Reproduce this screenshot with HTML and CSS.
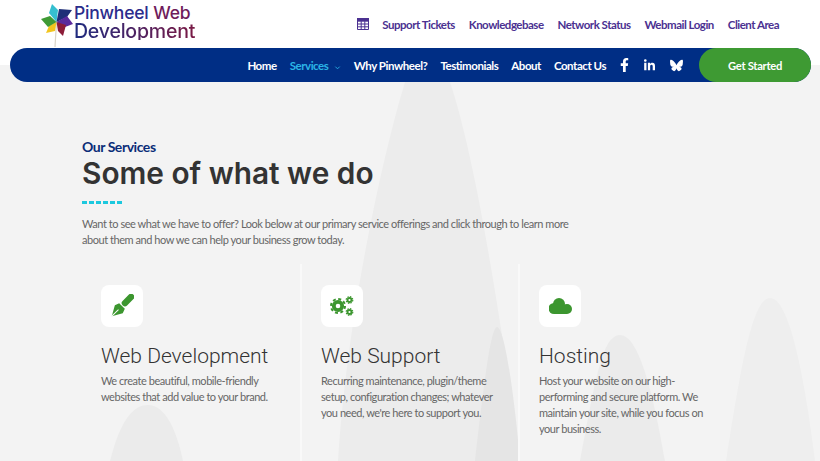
FILE: index.html
```html
<!DOCTYPE html>
<html lang="en">
<head>
  <meta charset="UTF-8" />
  <meta name="viewport" content="width=device-width, initial-scale=1.0" />
  <title>Pinwheel Web Development</title>
  <link rel="stylesheet" href="styles.css">
</head>
<body>
  <header class="top">
    <a class="logo" href="#">
      <svg class="pinwheel" viewBox="0 0 33 46" width="33" height="46">
        <path d="M15.5 20 L14 45" stroke="#d8d4c8" stroke-width="1.2"/>
        <path d="M15.500 20 L8 11 L11 2 L17 8 Z" fill="#35bfd0"/>
        <path d="M15.500 20 L18 7 L31 8 L26 15 Z" fill="#1f2f78"/>
        <path d="M15.500 20 L26 14 L32 22 L24 25 Z" fill="#5a2a9c"/>
        <path d="M15.500 20 L25 23 L22 34 L17 29 Z" fill="#8c1c38"/>
        <path d="M15.500 20 L14 29 L5 31 L8 24 Z" fill="#f2c51e"/>
        <path d="M15.500 20 L7 25 L0 17 L9 14 Z" fill="#3f9a35"/>
      </svg>
      <span class="logo-text">
        <span class="logo-line"><b class="navy">Pinwheel</b> <b class="plum">Web</b></span>
        <span class="logo-dev">Development</span>
      </span>
    </a>
    <nav class="toplinks">
      <svg class="table-icon" viewBox="0 0 12 12" width="12" height="12">
        <path d="M.5.5h11v11H.5zM.5 3.2h11M.5 6h11M.5 8.8h11M4.2 3.2v8.3M7.8 3.2v8.3" fill="none" stroke="#4b3191"/>
        <path d="M0 0h12v3H0z" fill="#4b3191"/>
      </svg>
      <a href="#">Support Tickets</a>
      <a href="#">Knowledgebase</a>
      <a href="#">Network Status</a>
      <a href="#">Webmail Login</a>
      <a href="#">Client Area</a>
    </nav>
  </header>

  <div class="navband">
    <nav class="pill">
      <a href="#">Home</a>
      <a href="#" class="current">Services <svg viewBox="0 0 8 8" width="7" height="7"><path d="M1.500 3 L4 5.500 L6.500 3" fill="none" stroke="#2bb5e6" stroke-width="1"/></svg></a>
      <a href="#">Why Pinwheel?</a>
      <a href="#">Testimonials</a>
      <a href="#">About</a>
      <a href="#">Contact Us</a>
      <span class="socials">
        <svg viewBox="0 0 320 512" width="9" height="14"><path fill="#fff" d="M279.14 288l14.22-92.66h-88.91v-60.13c0-25.35 12.42-50.06 52.24-50.06h40.42V6.26S260.43 0 225.36 0c-73.22 0-121.08 44.38-121.08 124.72v70.62H22.89V288h81.39v224h100.17V288z"/></svg>
        <svg viewBox="0 0 448 512" width="11" height="13"><path fill="#fff" d="M100.28 448H7.4V148.9h92.88zM53.79 108.1C24.09 108.1 0 83.5 0 53.8a53.79 53.79 0 0 1 107.58 0c0 29.7-24.1 54.3-53.79 54.3zM447.9 448h-92.68V302.4c0-34.7-.7-79.2-48.29-79.2-48.29 0-55.69 37.7-55.69 76.7V448h-92.78V148.9h89.08v40.8h1.3c12.4-23.5 42.69-48.3 87.88-48.3 94 0 111.28 61.9 111.28 142.3V448z"/></svg>
        <svg viewBox="0 0 512 512" width="13" height="13"><path fill="#fff" d="M111.8 62.2C170.2 105.9 233 194.7 256 242.4c23-47.6 85.8-136.4 144.2-180.2c42.1-31.6 110.3-56 110.3 21.8c0 15.5-8.9 130.5-14.1 149.2C478.2 298 412 314.6 353.1 304.5c102.9 17.5 129.1 75.5 72.5 133.5c-107.4 110.2-154.3-27.6-166.3-62.9c-1.7-4.9-2.6-7.8-3.3-7.8s-1.6 3-3.3 7.8c-12 35.3-59 173.1-166.3 62.9c-56.5-58-30.4-116 72.5-133.5C100 314.6 33.8 298 15.7 233.1C10.4 214.4 1.5 99.4 1.5 83.9c0-77.8 68.2-53.4 110.3-21.8z"/></svg>
      </span>
      <a href="#" class="cta">Get Started</a>
    </nav>
  </div>

  <main class="services">
    <svg class="hills" viewBox="0 0 820 379" width="820" height="379">
      <path d="M338 379 C345 260 375 100 405 0 L450 0 C475 75 500 230 520 379 Z" fill="#ececec"/>
      <path d="M475 379 C482 320 490 245 497 245 C505 245 515 320 520 379 Z" fill="#e5e5e5"/>
      <path d="M580 379 C595 300 602 253 620 253 C640 253 655 320 665 379 Z" fill="#ebebeb"/>
      <path d="M726 379 C740 290 752 216 770 216 C790 216 805 300 815 379 Z" fill="#eeeeee"/>
      <path d="M110 379 C120 340 132 323 148 323 C164 323 176 345 183 379 Z" fill="#ebebeb"/>
    </svg>
    <div class="intro">
      <div class="eyebrow">Our Services</div>
      <h2>Some of what we do</h2>
      <div class="dashes"></div>
      <p>Want to see what we have to offer? Look below at our primary service offerings and click through to learn more about them and how we can help your business grow today.</p>
    </div>
    <div class="cards">
      <article class="card">
        <div class="icon-box">
          <svg viewBox="0 0 24 24" width="24" height="24">
            <g transform="rotate(45 12 12)">
              <rect x="8.800" y="-4" width="6.400" height="15" rx="3" fill="#3c962f"/>
              <path d="M8 12h8l1.600 4.500-5.600 10-5.600-10z" fill="#3c962f"/>
              <path d="M12 17v9" stroke="#fff" stroke-width="1"/>
            </g>
          </svg>
        </div>
        <h3>Web Development</h3>
        <p>We create beautiful, mobile-friendly websites that add value to your brand.</p>
      </article>
      <article class="card">
        <div class="icon-box">
          <svg viewBox="0 0 24 20" width="24" height="20">
            <g fill="none" stroke="#3c962f">
              <circle cx="8" cy="10" r="4.200" stroke-width="3.800"/>
              <circle cx="8" cy="10" r="7" stroke-width="2" stroke-dasharray="3 2.500"/>
              <circle cx="19.500" cy="4" r="2" stroke-width="1.800"/>
              <circle cx="19.500" cy="4" r="3.300" stroke-width="1.200" stroke-dasharray="1.500 1.090"/>
              <circle cx="19.500" cy="16" r="2" stroke-width="1.800"/>
              <circle cx="19.500" cy="16" r="3.300" stroke-width="1.200" stroke-dasharray="1.500 1.090"/>
            </g>
          </svg>
        </div>
        <h3>Web Support</h3>
        <p>Recurring maintenance, plugin/theme setup, configuration changes; whatever you need, we're here to support you.</p>
      </article>
      <article class="card">
        <div class="icon-box">
          <svg viewBox="0 0 23 16" width="23" height="16">
            <g fill="#3c962f">
              <circle cx="10" cy="6" r="6"/>
              <circle cx="5" cy="10.500" r="5.500"/>
              <circle cx="18" cy="11" r="5"/>
              <rect x="5" y="8" width="13" height="8"/>
            </g>
          </svg>
        </div>
        <h3>Hosting</h3>
        <p>Host your website on our high-performing and secure platform. We maintain your site, while you focus on your business.</p>
      </article>
    </div>
  </main>
</body>
</html>
```

FILE: styles.css
```css
html, body { margin: 0; padding: 0; }
body { width: 820px; height: 461px; overflow: hidden; background: #f3f3f3; font-family: "Lato", sans-serif; color: #666; }
a { text-decoration: none; color: inherit; }

.top { display: flex; justify-content: space-between; align-items: flex-start; height: 48px; padding: 0 41px; background: #fff; box-sizing: border-box; }
.logo { display: flex; align-items: flex-start; padding-top: 2px; }
.pinwheel { flex: none; }
.logo-text { display: flex; flex-direction: column; font-family: "Inter", sans-serif; font-size: 17.5px; line-height: 18px; padding-top: 2px; letter-spacing: -.2px; }
.logo-line b { display: inline-block; font-weight: 500; }
.navy { color: #2b2c8c; }
.plum { color: #6f1c5c; }
.logo-dev { font-size: 19.5px; font-weight: 500; background: linear-gradient(90deg, #1f2c80, #7a1a45); -webkit-background-clip: text; background-clip: text; color: transparent; }

.toplinks { display: flex; align-items: center; height: 48px; font-size: 11.5px; letter-spacing: -.5px; font-weight: 700; color: #4b3191; gap: 14px; }
.table-icon { margin-right: -1px; }

.navband { background: linear-gradient(#fff 17px, #f3f3f3 17px); padding: 0 9px 0 10px; position: relative; z-index: 1; }
.pill { display: flex; align-items: center; justify-content: flex-end; height: 34px; border-radius: 17px; background: #002e85; font-size: 11.5px; letter-spacing: -.45px; font-weight: 700; color: #fff; gap: 13px; }
.pill .current { color: #2bb5e6; }
.pill .current svg { margin-left: 3px; vertical-align: -1px; }
.socials { display: flex; align-items: center; gap: 15px; margin: 0 3px 0 1px; }
.cta { display: flex; align-items: center; justify-content: center; width: 112px; height: 34px; border-radius: 17px; background: #3e9a33; font-size: 11.2px; letter-spacing: -.3px; }

.services { position: relative; height: 379px; box-sizing: border-box; padding: 57px 0 0 82px; }
.hills { position: absolute; left: 0; top: 0; }
.intro, .cards { position: relative; }
.eyebrow { font-size: 14px; letter-spacing: -.45px; font-weight: 700; line-height: 16px; color: #0a2d78; }
.intro h2 { margin: 0; font-family: "Inter", sans-serif; font-size: 29.8px; font-weight: 600; line-height: 36px; color: #333; }
.dashes { width: 41px; height: 3px; margin-top: 10px; background: repeating-linear-gradient(90deg, #1cc8de 0 5px, transparent 5px 7px); }
.intro p { width: 500px; margin: 12px 0 0; font-size: 11px; letter-spacing: -.45px; line-height: 16px; }

.cards { display: grid; grid-template-columns: 220px 218px 220px; margin-top: 16px; }
.card { padding: 21px 19px 0; height: 200px; box-sizing: border-box; border-right: 2px solid #f9f9f9; }
.card:last-child { border-right: 0; }
.icon-box { display: flex; align-items: center; justify-content: center; width: 42px; height: 42px; border-radius: 8px; background: #fff; }
.card h3 { margin: 16px 0 0; font-family: "Roboto", sans-serif; font-size: 21px; font-weight: 300; line-height: 26px; color: #333; }
.card p { margin: 4px 0 0; width: 172px; font-size: 11px; letter-spacing: -.45px; line-height: 16px; }
```
